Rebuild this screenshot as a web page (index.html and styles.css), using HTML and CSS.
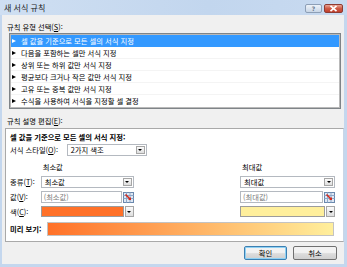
FILE: index.html
```html
<!DOCTYPE html>
<html lang="ko">
<head>
<meta charset="utf-8">
<title>새 서식 규칙</title>
<link rel="stylesheet" href="styles.css">
</head>
<body>
<div class="window">
  <div class="titlebar">
    <span class="title">새 서식 규칙</span>
    <div class="tb-buttons">
      <span class="btn-help">?</span>
      <span class="btn-close"><svg width="9" height="7" viewBox="0 0 9 7"><path d="M1.5 0.8 L7.5 6.2 M7.5 0.8 L1.5 6.2" stroke="#fff" stroke-width="1.6" fill="none"/></svg></span>
    </div>
  </div>
  <div class="client">
    <div class="label l1">규칙 유형 선택(<u>S</u>):</div>
    <ul class="list">
      <li class="row selected">셀 값을 기준으로 모든 셀의 서식 지정</li>
      <li class="row">다음을 포함하는 셀만 서식 지정</li>
      <li class="row">상위 또는 하위 값만 서식 지정</li>
      <li class="row">평균보다 크거나 작은 값만 서식 지정</li>
      <li class="row">고유 또는 중복 값만 서식 지정</li>
      <li class="row">수식을 사용하여 서식을 지정할 셀 결정</li>
    </ul>
    <div class="label l2">규칙 설명 편집(<u>E</u>):</div>
    <div class="panel">
      <div class="heading">셀 값을 기준으로 모든 셀의 서식 지정:</div>
      <div class="style-row">
        <span class="style-label">서식 스타일(<u>O</u>):</span>
        <div class="select style-select"><span class="sel-text">2가지 색조</span><span class="drop"></span></div>
      </div>
      <div class="grid">
        <span></span>
        <span class="colhead">최소값</span>
        <span></span>
        <span class="colhead">최대값</span>

        <span class="rowlabel">종류(<u>T</u>):</span>
        <div class="select"><span class="sel-text">최소값</span><span class="drop"></span></div>
        <span></span>
        <div class="select"><span class="sel-text">최대값</span><span class="drop"></span></div>

        <span class="rowlabel">값(<u>V</u>):</span>
        <div class="valbox"><span class="input">(최소값)</span><span class="range"><svg width="11" height="11" viewBox="0 0 11 11"><rect x="0.5" y="0.5" width="10" height="10" fill="#dfe8f4" stroke="#6a88ad"/><path d="M0.5 3.5 H10.5 M0.5 6.5 H10.5 M3.5 0.5 V10.5 M7 0.5 V10.5" stroke="#8fa8c8" stroke-width="1"/><path d="M2.5 2.5 L7 7" stroke="#d42a1c" stroke-width="1.6"/><path d="M5 8 L8 8 L8 5 Z" fill="#d42a1c"/></svg></span></div>
        <span></span>
        <div class="valbox"><span class="input">(최대값)</span><span class="range"><svg width="11" height="11" viewBox="0 0 11 11"><rect x="0.5" y="0.5" width="10" height="10" fill="#dfe8f4" stroke="#6a88ad"/><path d="M0.5 3.5 H10.5 M0.5 6.5 H10.5 M3.5 0.5 V10.5 M7 0.5 V10.5" stroke="#8fa8c8" stroke-width="1"/><path d="M2.5 2.5 L7 7" stroke="#d42a1c" stroke-width="1.6"/><path d="M5 8 L8 8 L8 5 Z" fill="#d42a1c"/></svg></span></div>

        <span class="rowlabel">색(<u>C</u>):</span>
        <div class="colorbox"><span class="swatch min"></span><span class="drop"></span></div>
        <span></span>
        <div class="colorbox"><span class="swatch max"></span><span class="drop"></span></div>
      </div>
      <div class="preview-row">
        <span class="preview-label">미리 보기:</span>
        <div class="preview"></div>
      </div>
    </div>
    <div class="buttons">
      <span class="button default">확인</span>
      <span class="button">취소</span>
    </div>
  </div>
</div>
</body>
</html>
```

FILE: styles.css
```css
* { box-sizing: border-box; margin: 0; padding: 0; }
body {
  margin: 0;
  font-family: "Noto Sans CJK KR", "Noto Sans", sans-serif;
  font-size: 7.3px;
  color: #000;
  background: #fff;
}
u { text-decoration: underline; text-underline-offset: 1px; }

.window {
  width: 347px;
  height: 267px;
  background: #c4d7ee;
  display: flex;
  flex-direction: column;
}

.titlebar {
  height: 15px;
  flex: none;
  display: flex;
  align-items: center;
  justify-content: space-between;
  padding: 0 4px 0 4px;
  background: linear-gradient(90deg, #cfdff2, #c2d6ee 60%, #c8daf0);
}
.title { line-height: 10px; color: #1b1b1b; font-size: 8px; }
.tb-buttons { display: flex; gap: 2px; align-items: center; margin-top: 1px; }
.btn-help {
  width: 17px;
  height: 9px;
  border: 1px solid #8d9fb6;
  border-radius: 2px;
  background: linear-gradient(#eef3f9, #c9d6e6);
  color: #6a7a8e;
  font-family: "DejaVu Sans", sans-serif;
  font-weight: bold;
  font-size: 6px;
  line-height: 7px;
  text-align: center;
}
.btn-close {
  width: 19px;
  height: 9px;
  border: 1px solid #8e3b32;
  border-radius: 2px;
  background: linear-gradient(#e8a597, #cf5a45 50%, #c0402d);
  display: flex;
  align-items: center;
  justify-content: center;
}
.btn-close svg { display: block; }

.client {
  flex: 1;
  margin: 0 3px 3px 2px;
  background: #f0f0f0;
  display: flex;
  flex-direction: column;
}

.label { line-height: 10px; margin-left: 5px; }
.l1 { margin-top: 7px; }
.l2 { margin-top: 7px; }

.list {
  list-style: none;
  margin: 1px 3px 0 7px;
  border: 1px solid #7f8488;
  box-shadow: inset 1px 1px 0 #b9b9b9, inset -1px -1px 0 #b9b9b9;
  padding: 1px;
  background: #fff;
}
.row {
  height: 12px;
  line-height: 12px;
  display: flex;
  align-items: center;
  gap: 4px;
  padding-left: 1px;
  border-bottom: 1px solid #f4f4f4;
}
.row:last-child { border-bottom: none; }
.row::before {
  content: "";
  width: 0;
  height: 0;
  border-left: 4px solid currentColor;
  border-top: 2.5px solid transparent;
  border-bottom: 2.5px solid transparent;
  margin-right: 1px;
}
.row.selected {
  background: #3399ff;
  color: #fff;
  border-bottom: none;
}

.panel {
  margin: 2px 0 0 3px;
  height: 114px;
  border: 1px solid #a9a9a9;
  border-right-color: #c9d6e6;
  background: #fff;
  padding: 3px 8px 0 4px;
  display: flex;
  flex-direction: column;
}
.heading { font-weight: bold; line-height: 10px; }

.style-row { display: flex; align-items: center; margin-top: 2px; }
.style-label { width: 56.7px; line-height: 10px; }
.style-select { width: 80px; }

.select {
  height: 12px;
  border: 1px solid #b4b9c0;
  background: #fff;
  display: flex;
  align-items: stretch;
  padding: 1px;
}
.sel-text { flex: 1; line-height: 8px; padding-left: 2px; }
.drop {
  width: 9px;
  flex: none;
  border: 1px solid #a6a6a6;
  background: linear-gradient(#fbfbfb, #dedede);
  display: flex;
  align-items: center;
  justify-content: center;
}
.drop::after {
  content: "";
  border-top: 2.5px solid #000;
  border-left: 2.5px solid transparent;
  border-right: 2.5px solid transparent;
}

.grid {
  display: grid;
  grid-template-columns: 30.7px 93px 1fr 95px;
  grid-template-rows: 10px 12px 12px 11px;
  row-gap: 3px;
  margin-top: 7px;
  align-items: center;
}
.grid > .colhead { padding-left: 2px; line-height: 10px; margin-bottom: 2px; }
.rowlabel { line-height: 10px; }

.valbox {
  height: 12px;
  display: flex;
  align-items: stretch;
  gap: 1px;
}
.input {
  flex: 1;
  border: 1px solid #b4b9c0;
  background: #fff;
  color: #7a7a7a;
  line-height: 10px;
  padding-left: 2px;
}
.range {
  width: 11px;
  flex: none;
  display: flex;
  align-items: center;
}
.range svg { display: block; }

.colorbox {
  height: 11px;
  display: flex;
  align-items: stretch;
  gap: 1px;
}
.swatch {
  flex: 1;
  border: 1px solid #9c9c9c;
}
.swatch.min { background: #ff7128; }
.swatch.max { background: #ffef9c; }
.colorbox .drop { width: 9px; }

.preview-row {
  display: flex;
  align-items: center;
  margin-top: 5px;
}
.preview-label { width: 36.7px; font-weight: bold; line-height: 10px; }
.preview {
  flex: 1;
  height: 14px;
  margin-right: 1px;
  border: 1px solid #c3c3c3;
  background: linear-gradient(90deg, #ff7128, #ffef9c);
}

.buttons {
  display: flex;
  justify-content: flex-end;
  gap: 6px;
  margin: 4px 7px 0 0;
}
.button {
  width: 43px;
  height: 14px;
  border: 1px solid #707070;
  border-radius: 2px;
  background: linear-gradient(#f2f2f2 45%, #dddddd 55%, #cfcfcf);
  line-height: 12px;
  text-align: center;
}
.button + .button { width: 44px; }
.button.default {
  border-color: #3c7fb1;
  box-shadow: inset 0 0 0 1px #8fd1f4;
}
```
